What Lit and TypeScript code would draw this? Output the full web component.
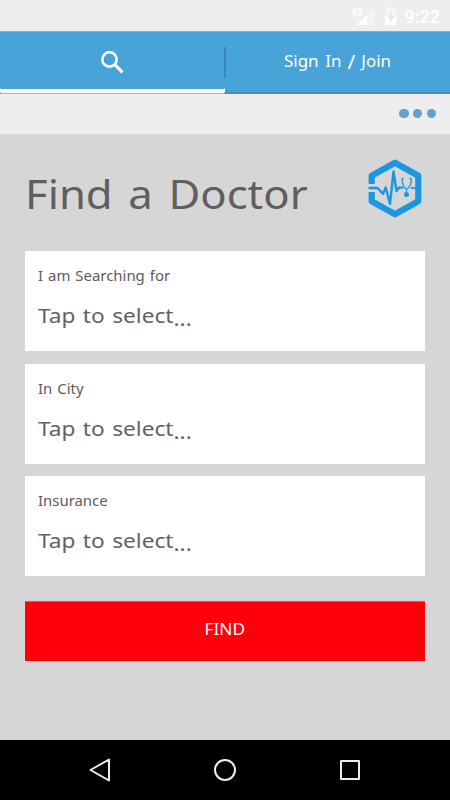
import { LitElement, html, css } from "lit";
import { customElement, property } from "lit/decorators.js";

@customElement("select-card")
class SelectCard extends LitElement {
  @property() label = "";

  static styles = css`
    :host {
      display: block;
      box-sizing: border-box;
      height: 100px;
      padding: 15px 12.6px;
      background: #fff;
      color: #626262;
      white-space: nowrap;
    }
    .label,
    .value {
      transform: scaleX(1.105);
      transform-origin: 0 0;
      width: max-content;
    }
    .label {
      font-size: 13.5px;
      line-height: 20px;
      word-spacing: 1px;
      color: #5c5c5c;
    }
    .value {
      margin-top: 13px;
      font-size: 20.5px;
      line-height: 32px;
      word-spacing: 1.4px;
    }
    .dots {
      line-height: 0;
      vertical-align: -3px;
    }
  `;

  render() {
    return html`
      <div class="label">${this.label}</div>
      <div class="value">Tap to select<span class="dots">...</span></div>
    `;
  }
}

@customElement("app-root")
class AppRoot extends LitElement {
  static styles = css`
    :host {
      display: flex;
      flex-direction: column;
      width: 450px;
      height: 800px;
      overflow: hidden;
      background: #d6d6d6;
      font-family: "Noto Sans", sans-serif;
      white-space: nowrap;
    }
    svg {
      display: block;
    }
    .wide {
      display: inline-block;
      transform: scaleX(1.08);
    }
    .status {
      height: 31px;
      flex: none;
      box-sizing: border-box;
      display: flex;
      align-items: center;
      justify-content: flex-end;
      padding: 2px 10px 0 0;
      background: #eeeeee;
      color: #fff;
    }
    .clock {
      font: 500 18px/22px Roboto, sans-serif;
      margin-left: 7px;
    }
    .tabs {
      height: 63px;
      flex: none;
      box-sizing: border-box;
      display: grid;
      grid-template-columns: 224px 2px 224px;
      background: #48a3d9;
      border-top: 1px solid #78b1d4;
      border-bottom: 2px solid #4b8db7;
      color: #fff;
    }
    .tab {
      display: flex;
      align-items: center;
      justify-content: center;
      font-size: 16px;
    }
    .tab.active {
      margin-bottom: -2px;
      margin-right: -1px;
      box-sizing: border-box;
      border-bottom: 1px solid #b0b0b0;
      border-radius: 2px;
      box-shadow: inset 0 -4px 0 #fff;
    }
    .tab .wide {
      word-spacing: 2.2px;
      margin: -2px 2px 0 0;
      transform: scaleX(1.06);
    }
    .slash {
      display: inline-block;
      font-size: 20px;
      line-height: 0;
      position: relative;
      top: 2px;
      margin: 0 -0.8px;
    }
    .divider {
      width: 1.5px;
      height: 31px;
      margin-top: 15px;
      background: #3e87b5;
    }
    .more {
      height: 40px;
      flex: none;
      box-sizing: border-box;
      display: flex;
      align-items: center;
      justify-content: flex-end;
      gap: 4.4px;
      padding: 0 14.3px 0.6px 0;
      background: #eeeeee;
    }
    .more i {
      width: 9.2px;
      height: 9.2px;
      border-radius: 50%;
      background: #659fce;
    }
    main {
      flex: 1;
      padding: 0 25px;
    }
    .heading {
      height: 117px;
      display: flex;
      justify-content: space-between;
    }
    h1 {
      margin: 30px 0 0 0;
      font-size: 40px;
      line-height: 60px;
      font-weight: 400;
      color: #5f5f5f;
      transform: scaleX(1.09);
      transform-origin: 0 0;
      word-spacing: 4px;
    }
    .logo {
      margin-top: 25px;
      margin-right: 2px;
    }
    .cards {
      display: flex;
      flex-direction: column;
      gap: 12.5px;
    }
    .find {
      display: block;
      box-sizing: border-box;
      width: 100%;
      height: 60px;
      margin-top: 25px;
      padding: 0 0 6px;
      border: 0;
      border-top: 1px solid #d75a5a;
      background: #ff000a;
      color: #fff;
      font: 16px "Noto Sans", sans-serif;
    }
    .nav {
      height: 60px;
      flex: none;
      background: #000;
    }
  `;

  render() {
    return html`
      <div class="status">
        <svg width="48" height="22" viewBox="0 0 48 22">
          <text x="1.5" y="10" font-family="Roboto" font-weight="700" font-size="10.5" textLength="11" lengthAdjust="spacingAndGlyphs" fill="#fff">4G</text>
          <path d="M16 10 24 2V19H16Z" fill="#f4f4f4" />
          <path d="M6.500 19 17 8.500V19Z" fill="#fff" />
          <path d="M38 1H43V2.500H46.500V10.500H35V2.500H38Z" fill="#f6f6f6" />
          <path d="M35 10.500H46.500V19H35Z" fill="#fff" />
          <path d="M42 5 37.500 12H40.500L39.500 17 44.500 10H41.500Z" fill="#e6e6e6" />
        </svg>
        <span class="clock">9:22</span>
      </div>
      <div class="tabs">
        <div class="tab active">
          <svg width="23" height="23" viewBox="0 0 23 23" fill="none" stroke="#fff">
            <circle cx="8.500" cy="8.400" r="7.200" stroke-width="2.600" />
            <path d="M13.300 13.200 21.500 21.400" stroke-width="3.100" />
          </svg>
        </div>
        <div class="divider"></div>
        <div class="tab"><span class="wide">Sign In <span class="slash">/</span> Join</span></div>
      </div>
      <div class="more"><i></i><i></i><i></i></div>
      <main>
        <div class="heading">
          <h1>Find a Doctor</h1>
          <svg class="logo" width="55" height="60" viewBox="0 0 55 60" fill="none" stroke="#1b97e0">
            <path d="M3.700 25V16.800L27 3.700 50.300 16.800V42.200L27 55.300 3.700 42.200V33" stroke-width="6.200" stroke-linejoin="round" />
            <path d="M0.500 29H9.500L15 34.800 17.800 28.500 22 45 25.500 12.500 28.500 32 31 28.600H35.500" stroke-width="2.400" stroke-linejoin="round" />
            <path d="M42.500 29H48" stroke-width="1.600" />
            <path d="M35.700 19.500H34.300C33.300 24 36 28 38.500 30.500 41.500 28 44.200 24 43 19.500H41.500M38.500 30V35" stroke-width="1.300" />
            <circle cx="38.500" cy="35.500" r="2.500" fill="#1b97e0" stroke="none" />
          </svg>
        </div>
        <div class="cards">
          <select-card label="I am Searching for"></select-card>
          <select-card label="In City"></select-card>
          <select-card label="Insurance"></select-card>
        </div>
        <button class="find"><span class="wide">FIND</span></button>
      </main>
      <div class="nav">
        <svg width="450" height="60" viewBox="0 0 450 60" fill="none" stroke="#eee" stroke-width="2" stroke-linejoin="round">
          <path d="M90.500 30 109 19.500V40.500Z" />
          <circle cx="225" cy="30" r="10" />
          <rect x="341" y="21" width="18" height="18" />
        </svg>
      </div>
    `;
  }
}
